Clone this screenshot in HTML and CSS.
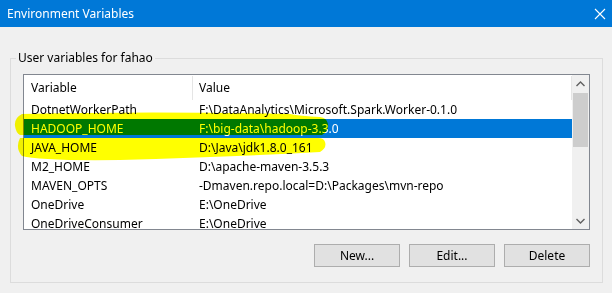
FILE: index.html
```html
<!DOCTYPE html>
<html lang="en">
<head>
    <meta charset="UTF-8">
    <title>Environment Variables</title>
    <link rel="stylesheet" href="styles.css">
</head>
<body>
    <div class="window">
        <!-- 제목 표시줄 -->
        <div class="titlebar">
            <span class="title">Environment Variables</span>
            <svg class="close" width="12" height="12" viewBox="0 0 12 12">
                <path d="M1 1 L11 11 M11 1 L1 11" stroke="#fff" stroke-width="1.1" fill="none"/>
            </svg>
        </div>

        <div class="content">
            <fieldset class="group">
                <legend>User variables for fahao</legend>

                <div class="listbox">
                    <div class="list">
                        <div class="row header">
                            <div class="cell name">Variable</div>
                            <div class="cell value">Value</div>
                        </div>
                        <div class="row">
                            <div class="cell name">DotnetWorkerPath</div>
                            <div class="cell value">F:\DataAnalytics\Microsoft.Spark.Worker-0.1.0</div>
                        </div>
                        <div class="row selected">
                            <div class="cell name">HADOOP_HOME</div>
                            <div class="cell value">F:\big-data\hadoop-3.3.0</div>
                        </div>
                        <div class="row">
                            <div class="cell name">JAVA_HOME</div>
                            <div class="cell value">D:\Java\jdk1.8.0_161</div>
                        </div>
                        <div class="row">
                            <div class="cell name">M2_HOME</div>
                            <div class="cell value">D:\apache-maven-3.5.3</div>
                        </div>
                        <div class="row">
                            <div class="cell name">MAVEN_OPTS</div>
                            <div class="cell value">-Dmaven.repo.local=D:\Packages\mvn-repo</div>
                        </div>
                        <div class="row">
                            <div class="cell name">OneDrive</div>
                            <div class="cell value">E:\OneDrive</div>
                        </div>
                        <div class="row">
                            <div class="cell name">OneDriveConsumer</div>
                            <div class="cell value">E:\OneDrive</div>
                        </div>
                    </div>

                    <!-- 스크롤바 -->
                    <div class="scrollbar">
                        <div class="arrow">
                            <svg width="9" height="6" viewBox="0 0 9 6"><path d="M0.5 5 L4.5 1 L8.5 5" stroke="#606060" stroke-width="1.4" fill="none"/></svg>
                        </div>
                        <div class="thumb"></div>
                        <div class="track"></div>
                        <div class="arrow">
                            <svg width="9" height="6" viewBox="0 0 9 6"><path d="M0.5 1 L4.5 5 L8.5 1" stroke="#606060" stroke-width="1.4" fill="none"/></svg>
                        </div>
                    </div>
                </div>

                <div class="buttons">
                    <button class="btn">New...</button>
                    <button class="btn">Edit...</button>
                    <button class="btn">Delete</button>
                </div>
            </fieldset>
        </div>

        <!-- 형광펜 표시 -->
        <svg class="marker" width="612" height="293" viewBox="0 0 612 293">
            <path d="M22 114 Q14 118 15 126 Q16 133 20 135 L322 135 Q329 131 328 124 Q327 118 320 117 Q300 116 290 114 Q150 111 22 114 Z" fill="#ffff00"/>
            <path d="M20 135 L20 138 Q15 148 22 156 Q40 161 120 160 Q230 157 320 152 Q327 148 325 142 Q324 138 318 138 L20 138 Z" fill="#ffff00"/>
        </svg>
    </div>
</body>
</html>
```

FILE: styles.css
```css
body {
    margin: 0;
    padding: 0;
    background: #f0f0f0;
    font-family: "Noto Sans", "Open Sans", sans-serif;
    font-size: 12px;
    color: #000;
}

.window {
    position: relative;
    width: 612px;
    height: 293px;
    overflow: hidden;
}

/* 제목 표시줄 */
.titlebar {
    height: 27px;
    background: #0078d7;
    display: flex;
    align-items: center;
    justify-content: space-between;
    padding: 0 7px 0 7px;
    color: #fff;
}

.title {
    font-size: 12px;
}

.close {
    margin-right: -1px;
}

.content {
    padding: 23px 9px 0 10px;
}

.group {
    margin: 0;
    border: 1px solid #dcdcdc;
    padding: 8px 12px 15px 12px;
}

.group legend {
    padding: 0 2px;
    margin-left: -7px;
    line-height: 16px;
}

/* 목록 상자 */
.listbox {
    display: flex;
    height: 154px;
    border: 1px solid #828790;
    background: #fff;
}

.list {
    flex: 1;
    overflow: hidden;
}

.row {
    display: flex;
    height: 19px;
    align-items: center;
}

.row.header {
    height: 25px;
}

.cell {
    white-space: nowrap;
}

.cell.name {
    width: 161px;
    padding-left: 7px;
}

.cell.value {
    flex: 1;
    padding-left: 7px;
}

.header .cell.value {
    border-left: 1px solid #e5e5e5;
    border-right: 1px solid #e5e5e5;
    height: 24px;
    line-height: 24px;
    margin-right: 0;
    padding-left: 6px;
}

.row.selected {
    background: #0078d7;
    color: #fff;
}

/* 스크롤바 */
.scrollbar {
    width: 17px;
    background: #f0f0f0;
    display: flex;
    flex-direction: column;
}

.arrow {
    height: 17px;
    display: flex;
    align-items: center;
    justify-content: center;
}

.thumb {
    height: 54px;
    margin: 1px 1px 0 1px;
    background: #cdcdcd;
}

.track {
    flex: 1;
}

/* 버튼 */
.buttons {
    display: flex;
    justify-content: flex-end;
    gap: 9px;
    margin-top: 14px;
}

.btn {
    width: 86px;
    height: 23px;
    background: #e1e1e1;
    border: 1px solid #adadad;
    font-family: inherit;
    font-size: 12px;
    color: #000;
    padding: 0;
}

/* 형광펜 오버레이 */
.marker {
    position: absolute;
    left: 0;
    top: 0;
    mix-blend-mode: multiply;
    pointer-events: none;
}
```
